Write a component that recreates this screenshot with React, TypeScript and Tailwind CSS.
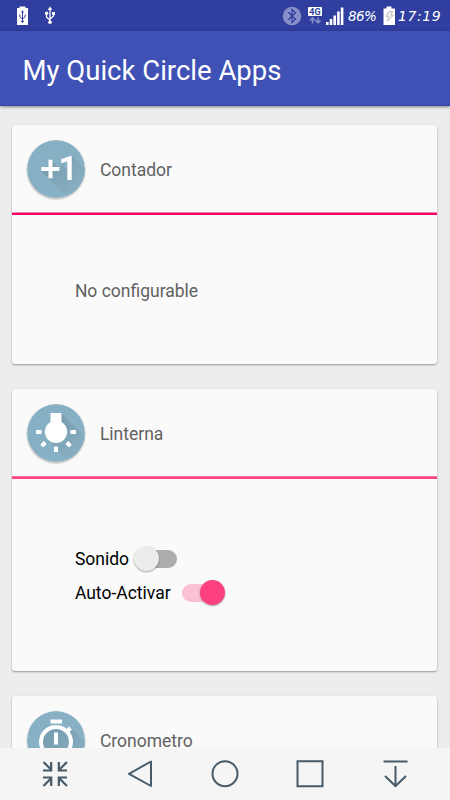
import { useState } from "react";
import type { ReactNode } from "react";
import clsx from "clsx";

function StatusBar() {
  return (
    <div className="h-[31px] shrink-0 bg-[#303f9f] flex items-center text-white">
      <svg className="ml-4 shrink-0" width="42" height="31" viewBox="0 0 42 31" fill="none">
        <path d="M1 8h2.5V6.5h6V8H12v17H1z" fill="#fff" />
        <path d="M6.5 11v11M3.8 14.5v2.3l2.7 2.2 2.7-2.2v-2.3" stroke="#303f9f" strokeWidth="1" />
        <path d="M6.5 10l1.5 2.5H5z" fill="#303f9f" />
        <circle cx="6.5" cy="21.5" r="1.2" fill="#303f9f" />
        <path d="M34 9.5v13M30.5 13v4l3.5 3.2M37.5 13v3l-3.5 3" stroke="#fff" strokeWidth="1.3" />
        <path d="M34 6.5l2.3 3.5h-4.6z" fill="#fff" />
        <path d="M36 12h3v3h-3z" fill="#fff" />
        <circle cx="30.6" cy="13.3" r="1.7" fill="#fff" />
        <circle cx="34" cy="22.2" r="1.8" fill="#fff" />
      </svg>

      <svg className="ml-auto shrink-0" width="64" height="31" viewBox="0 0 64 31" fill="none">
        <circle cx="11" cy="16" r="9.2" fill="#8790c8" />
        <path d="M7.3 12.3l7.2 7-3.5 3.2V9.5l3.5 3.2-7.2 7" stroke="#303f9f" strokeWidth="1.3" />
        <rect x="27" y="7" width="14" height="9" rx="1" fill="#fff" />
        <text x="34" y="14.8" textAnchor="middle" fontSize="9" fontWeight="700" fill="#303f9f" fontFamily="Roboto, sans-serif">4G</text>
        <path d="M31.5 23.5v-5M29 20.5l2.5-2.7 2.5 2.7M37 17.5v5M34.5 20.3l2.5 2.7 2.5-2.7" stroke="#8790c8" strokeWidth="1.5" />
        <path d="M45 22h2.6v3H45zM48.7 19h2.6v6h-2.6zM52.4 15.5H55V25h-2.6zM56.1 11.5h2.6V25h-2.6zM59.8 7.5h2.6V25h-2.6z" fill="#fff" />
      </svg>
      <span className="ml-[3px] w-[31px] whitespace-nowrap font-['DejaVu_Sans',sans-serif] italic text-[13.5px] tracking-[-0.6px] leading-[31px] pt-0.5">
        86%
      </span>
      <svg className="ml-1 shrink-0" width="13" height="31" viewBox="0 0 13 31" fill="none">
        <path d="M.5 8.5h3V6.5h5v2H12V25H.5z" fill="#fff" />
        <path d="M5.5 11.5h4L8 15h2.500l-6 6.500 1.200-4.700H3z" fill="#eee" stroke="#b5b5b5" strokeWidth=".8" />
      </svg>
      <span className="ml-[2px] w-[52px] whitespace-nowrap font-['DejaVu_Sans',sans-serif] italic text-[14px] tracking-[0.6px] leading-[31px] pt-0.5">
        17:19
      </span>
    </div>
  );
}

interface AppIconProps {
  id: string;
  shadow: string;
  children: ReactNode;
}

// round launcher icon with a long shadow fading to the bottom right
function AppIcon({ id, shadow, children }: AppIconProps) {
  return (
    <svg className="size-[58px] shrink-0 rounded-full shadow-[0_1px_2px_rgba(0,0,0,0.35)]" viewBox="0 0 58 58" fill="none">
      <defs>
        <linearGradient id={id} gradientUnits="userSpaceOnUse" x1="20" y1="20" x2="52" y2="52">
          <stop offset="0.2" stopColor="#7b9fb2" />
          <stop offset="1" stopColor="#88b0c4" />
        </linearGradient>
      </defs>
      <circle cx="29" cy="29" r="29" fill="#88b0c4" />
      <path d={shadow} fill={`url(#${id})`} />
      {children}
    </svg>
  );
}

function CounterIcon() {
  return (
    <AppIcon id="counter-shadow" shadow="M14 31l27 27h17V29L45 16v24L35 23 34 30 25.5 21.5z">
      <path d="M14.3 29h18M23.5 19.7v18.6" stroke="#fff" strokeWidth="4" />
      <path d="M44.7 16h-1.5L34.3 19.2v4l6-2V40h4.4z" fill="#fff" />
    </AppIcon>
  );
}

function BulbIcon() {
  return (
    <AppIcon id="bulb-shadow" shadow="M21 36l22 22h15V33L34.5 9.5z">
      <path d="M23.5 9h11v9a11.2 11.2 0 1 1-11 0z" fill="#fff" />
      <path d="M9 28h5.5M43.5 28H49M29 42.500V48M18.300 38.500l-3.600 3.600M39.800 38.500l3.600 3.600" stroke="#fff" strokeWidth="4" />
    </AppIcon>
  );
}

function StopwatchIcon() {
  return (
    <AppIcon id="stopwatch-shadow" shadow="M18 42l16 16h24V31L43.5 16.5 40 20A15 15 0 0 0 18 42z">
      <circle cx="29" cy="31" r="15" stroke="#fff" strokeWidth="4" />
      <path d="M23.5 10.5H35M29 21.5v12M40 20.5l3.500-3.500" stroke="#fff" strokeWidth="4" />
    </AppIcon>
  );
}

interface CardProps {
  title: string;
  icon: ReactNode;
  className: string;
  lineClass?: string;
  children?: ReactNode;
}

function Card({ title, icon, className, lineClass, children }: CardProps) {
  return (
    <section className={clsx("shrink-0 bg-[#fafafa] rounded-[3px] shadow-[0_1px_2px_rgba(0,0,0,0.38)]", className)}>
      <header className="h-[87px] pl-[15px] pt-[15px] flex">
        {icon}
        <h2 className="ml-[14.5px] mt-[20px] h-[21px] leading-[21px] text-[17.5px] text-[#616161]">{title}</h2>
      </header>
      <div className={clsx("h-[3px] border-t", lineClass)} />
      {children}
    </section>
  );
}

interface ToggleProps {
  on: boolean;
  label: string;
  onChange: (on: boolean) => void;
}

function Toggle({ on, label, onChange }: ToggleProps) {
  return (
    <button
      role="switch"
      aria-checked={on}
      aria-label={label}
      onClick={() => onChange(!on)}
      className="relative w-[44px] h-[26px] flex items-center"
    >
      <span className={clsx("mx-px w-[42px] h-[18px] rounded-full", on ? "bg-[#fcc0d5]" : "bg-[#adadad]")} />
      <span
        className={clsx(
          "absolute top-0 size-[25px] rounded-full shadow-[0_1px_2px_rgba(0,0,0,0.35)]",
          on ? "right-0 bg-[#fc4080]" : "left-0 bg-[#ececec]"
        )}
      />
    </button>
  );
}

function NavBar() {
  return (
    <nav className="h-[52px] shrink-0 bg-[#f5f5f5] px-3 flex items-center justify-between text-[#465a69]">
      <button className="w-[85px] h-[52px] flex justify-center">
        <svg width="30" height="52" viewBox="0 0 30 52" fill="none" stroke="currentColor" strokeWidth="2.2">
          <path d="M3.5 14l7.5 7.5M11.2 14v8.5H3M27 14l-7.5 7.5M18.8 14v8.5H27M3.5 38l7.5-7.5M11.2 38v-8.5H3M27 38l-7.5-7.5M18.8 38v-8.5H27" />
        </svg>
      </button>
      <button className="w-[85px] h-[52px] flex justify-center">
        <svg width="30" height="52" viewBox="0 0 30 52" fill="none" stroke="currentColor" strokeWidth="2" strokeLinejoin="round">
          <path d="M26 13.5V38L4 25.8z" />
        </svg>
      </button>
      <button className="w-[85px] h-[52px] flex justify-center">
        <svg width="30" height="52" viewBox="0 0 30 52" fill="none" stroke="currentColor" strokeWidth="2">
          <circle cx="15" cy="25.7" r="12.5" />
        </svg>
      </button>
      <button className="w-[85px] h-[52px] flex justify-center">
        <svg width="30" height="52" viewBox="0 0 30 52" fill="none" stroke="currentColor" strokeWidth="2">
          <path d="M2.5 13.2h25v25h-25z" />
        </svg>
      </button>
      <button className="w-[85px] h-[52px] flex justify-center">
        <svg width="30" height="52" viewBox="0 0 30 52" fill="none" stroke="currentColor" strokeWidth="2">
          <path d="M2.5 13.4h24M14.5 18v20M4 28l10.5 10L25 28" />
        </svg>
      </button>
    </nav>
  );
}

export default function App() {
  const [sound, setSound] = useState(false);
  const [auto, setAuto] = useState(true);

  return (
    <div className="w-[450px] h-[800px] overflow-hidden flex flex-col bg-[#ededed] font-[Roboto,sans-serif]">
      <StatusBar />
      <div className="h-[75px] shrink-0 bg-[#3f51b5] border-b border-[#3545a5] pl-[22.5px] shadow-[0_1px_3px_rgba(0,0,0,0.45)]">
        <h1 className="text-[27.5px] leading-[79px] text-white whitespace-nowrap">My Quick Circle Apps</h1>
      </div>

      <main className="flex-1 min-h-0 overflow-hidden pt-[19px] pl-[12.4px] pr-[12.6px] flex flex-col">
        <Card title="Contador" icon={<CounterIcon />} className="h-[239px]" lineClass="border-[#fa7fae] bg-[#f90068]">
          <p className="pl-[62.5px] pt-[65px] text-[17.5px] leading-[22px] text-[#616161]">No configurable</p>
        </Card>

        <Card title="Linterna" icon={<BulbIcon />} className="h-[282px] mt-[25px]" lineClass="border-[#fc6b9c] bg-[#fb4384]">
          <div className="pl-[62.5px] pt-[67px] text-[17.5px] text-black">
            <div className="h-[34px] flex items-start">
              <span className="w-[59px] leading-[27px]">Sonido</span>
              <Toggle on={sound} label="Sonido" onChange={setSound} />
            </div>
            <div className="h-[34px] flex items-start">
              <span className="w-[106px] leading-[27px]">Auto-Activar</span>
              <Toggle on={auto} label="Auto-Activar" onChange={setAuto} />
            </div>
          </div>
        </Card>

        <Card title="Cronometro" icon={<StopwatchIcon />} className="h-[239px] mt-[25px]" />
      </main>

      <NavBar />
    </div>
  );
}
